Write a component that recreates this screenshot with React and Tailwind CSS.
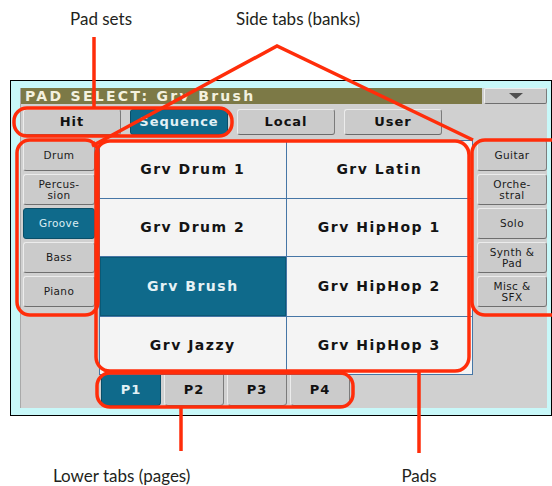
import React from 'react';

const ui = { fontFamily: '"DejaVu Sans", Verdana, sans-serif' };
const label = { fontFamily: 'Lato, "Open Sans", sans-serif' };

const topTabs = [
    { name: 'Hit' },
    { name: 'Sequence', active: true },
    { name: 'Local' },
    { name: 'User' },
];

const leftTabs = [
    { lines: ['Drum'] },
    { lines: ['Percus-', 'sion'] },
    { lines: ['Groove'], active: true },
    { lines: ['Bass'] },
    { lines: ['Piano'] },
];

const rightTabs = [
    { lines: ['Guitar'] },
    { lines: ['Orche-', 'stral'] },
    { lines: ['Solo'] },
    { lines: ['Synth &', 'Pad'] },
    { lines: ['Misc &', 'SFX'] },
];

const pads = [
    'Grv Drum 1', 'Grv Latin',
    'Grv Drum 2', 'Grv HipHop 1',
    'Grv Brush', 'Grv HipHop 2',
    'Grv Jazzy', 'Grv HipHop 3',
];

const pages = ['P1', 'P2', 'P3', 'P4'];

function SideTab({ tab }) {
    const base = tab.active
        ? 'bg-[#0f6a8b] text-[#dbeef3] border-[#0a4f68]'
        : 'bg-[#cbcbcb] text-[#1a1a1a] border-t-[#ececec] border-l-[#ececec] border-r-[#7d7d7d] border-b-[#6f6f6f]';
    return (
        <div className={`flex flex-col items-center justify-center h-[31px] rounded-[3px] border ${base}`}>
            {tab.lines.map((l) => (
                <span key={l} className="text-[10.5px] leading-[11px] tracking-[0.4px]">{l}</span>
            ))}
        </div>
    );
}

export default function App() {
    return (
        <div className="relative w-[552px] h-[486px] bg-white overflow-hidden">
            {/* top labels */}
            <div className="flex h-[80px] pt-[9px] text-[17px] leading-[20px] text-[#231f20]" style={label}>
                <span className="ml-[70px]">Pad sets</span>
                <span className="ml-[104px]">Side tabs (banks)</span>
            </div>

            {/* device screen */}
            <div className="ml-[10px] w-[542px] h-[336px] border border-black bg-[#c8f8f9] pt-[7px] pl-[9px] pr-[4px] pb-[7px]" style={ui}>
                <div className="flex flex-col h-full bg-[#d0d0d0] border-l border-[#a9a9a9]">
                    {/* title */}
                    <div className="flex h-[16px] gap-[2px]">
                        <div className="w-[461px] bg-[#7c7946] text-[#f3f1df] font-bold text-[14px] leading-[16px] pl-[4px] tracking-[2.3px]">
                            PAD SELECT: Grv Brush
                        </div>
                        <div className="flex-1 flex items-center justify-center rounded-[2px] bg-[#c9c9c9] border border-t-[#eeeeee] border-l-[#eeeeee] border-r-[#7b7b7b] border-b-[#6e6e6e]">
                            <svg width="14" height="6" viewBox="0 0 14 6">
                                <path d="M0 0 H14 L7 6 Z" fill="#4f4f4f" />
                            </svg>
                        </div>
                    </div>

                    {/* pad sets */}
                    <div className="flex gap-[9px] mt-[5px] pl-[2px] h-[26px]">
                        {topTabs.map((t) => (
                            <div
                                key={t.name}
                                className={`w-[98px] flex items-center justify-center rounded-[3px] border text-[13px] font-bold tracking-[1px] ${t.active
                                    ? 'bg-[#0f6a8b] text-[#e2f1f5] border-[#0a4f68]'
                                    : 'bg-[#cbcbcb] text-[#111] border-t-[#ececec] border-l-[#ececec] border-r-[#7b7b7b] border-b-[#6b6b6b]'}`}
                            >
                                {t.name}
                            </div>
                        ))}
                    </div>

                    {/* body */}
                    <div className="flex mt-[5px]">
                        <div className="w-[78px] pl-[2px] flex flex-col gap-[3px]">
                            {leftTabs.map((t, i) => (
                                <div key={i} className="w-[72px]"><SideTab tab={t} /></div>
                            ))}
                        </div>

                        <div className="w-[374px] flex flex-col">
                            <div className="grid grid-cols-2 gap-px bg-[#4676a6] border border-[#4676a6] h-[235px]">
                                {pads.map((p) => (
                                    <div
                                        key={p}
                                        className={`flex items-center justify-center font-bold text-[14px] tracking-[1.5px] ${p === 'Grv Brush'
                                            ? 'bg-[#0f6a8b] text-[#e6f2f5] border border-[#0b5975]'
                                            : 'bg-[#f4f4f4] text-[#141414]'}`}
                                    >
                                        {p}
                                    </div>
                                ))}
                            </div>
                            <div className="flex gap-[3px] pl-[2px]">
                                {pages.map((p, i) => (
                                    <div
                                        key={p}
                                        className={`w-[60px] h-[31px] flex items-center justify-center rounded-b-[4px] border border-t-0 font-bold text-[13px] tracking-[1px] ${i === 0
                                            ? 'bg-[#0f6a8b] text-[#e2f1f5] border-[#0a4f68]'
                                            : 'bg-[#cbcbcb] text-[#111] border-l-[#ececec] border-r-[#7b7b7b] border-b-[#6b6b6b]'}`}
                                    >
                                        {p}
                                    </div>
                                ))}
                            </div>
                        </div>

                        <div className="flex-1 pl-[4px] flex flex-col gap-[3px]">
                            {rightTabs.map((t, i) => (
                                <div key={i} className="w-[70px]"><SideTab tab={t} /></div>
                            ))}
                        </div>
                    </div>
                </div>
            </div>

            {/* bottom labels */}
            <div className="flex mt-[50px] text-[17px] leading-[19px] text-[#231f20]" style={label}>
                <span className="ml-[53px]">Lower tabs (pages)</span>
                <span className="ml-[211px]">Pads</span>
            </div>

            {/* callouts */}
            <svg className="absolute inset-0 pointer-events-none" width="552" height="486" viewBox="0 0 552 486">
                <g fill="none" stroke="#ff2d0a" strokeWidth="3.5" strokeLinecap="butt">
                    <line x1="94" y1="37" x2="94" y2="107" />
                    <polyline points="92,146 277,46 473,140" />
                    <line x1="181" y1="407" x2="181" y2="451" />
                    <line x1="419" y1="371" x2="419" y2="453" />
                    <rect x="14" y="108" width="218" height="28" rx="13" />
                    <rect x="17" y="140" width="81" height="175" rx="13" />
                    <rect x="96" y="141" width="373" height="230" rx="14" />
                    <rect x="472" y="140" width="95" height="175" rx="13" />
                    <rect x="97" y="373" width="256" height="34" rx="13" />
                </g>
            </svg>
        </div>
    );
}
